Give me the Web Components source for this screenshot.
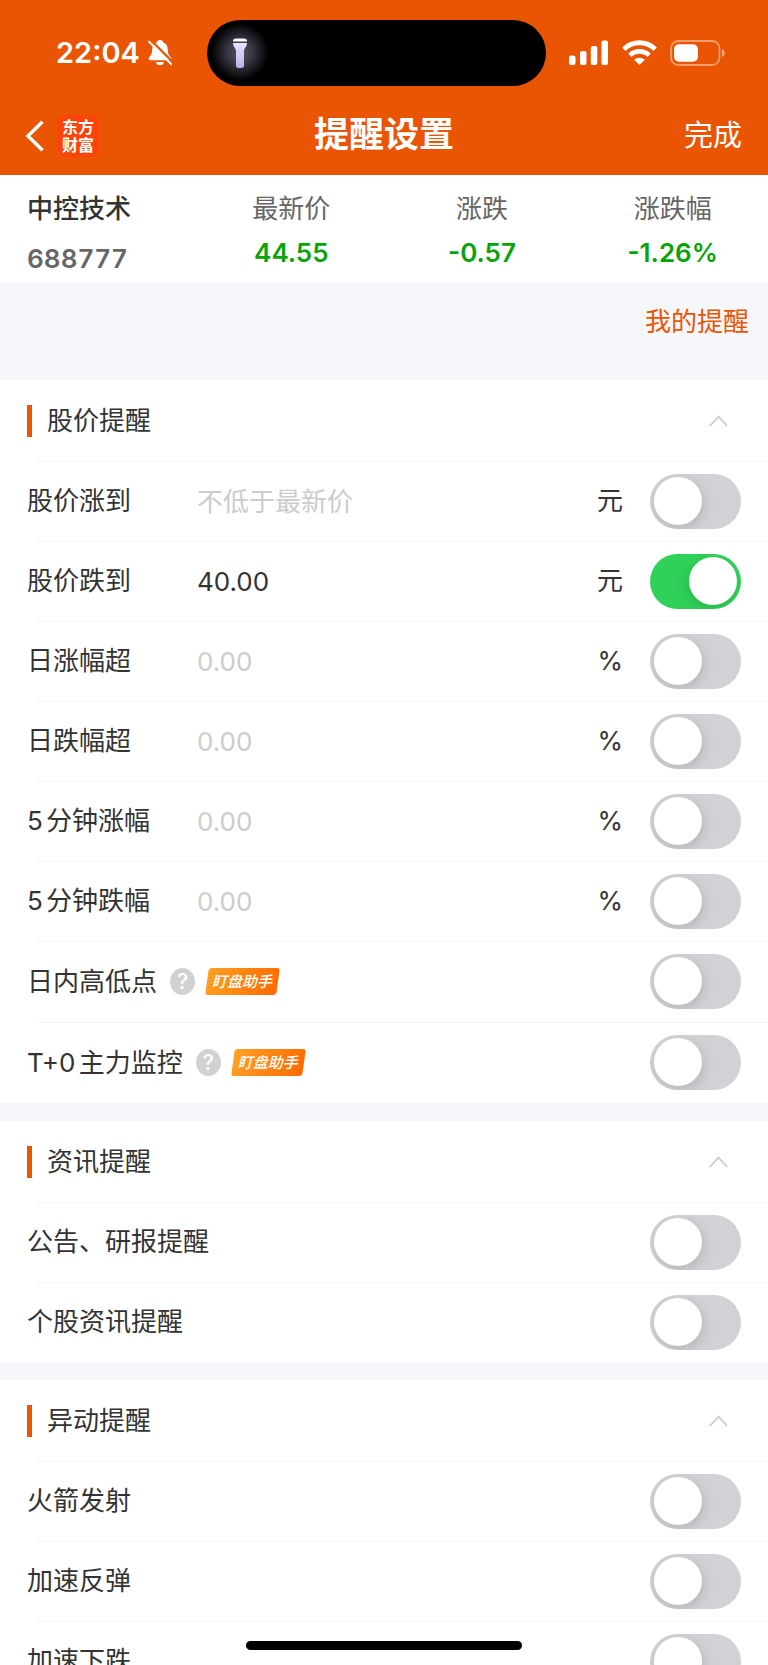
<!DOCTYPE html>
<html lang="zh-CN">
<head>
<meta charset="utf-8">
<meta name="viewport" content="width=device-width, initial-scale=1">
<title>提醒设置</title>
<style>
html, body { margin: 0; height: 100%; }
body { font-family: Inter, "Noto Sans CJK SC", sans-serif; font-size: 26px; line-height: 36px; text-autospace: normal; color: #333; background: #f6f7fa; --brand: #ea5504; --line: #f4f4f6; --muted: #666; --fall: #07a307; }
</style>
</head>
<body>
<alert-screen>
  <status-bar slot="top"></status-bar>
  <nav-bar slot="top" heading="提醒设置" action="完成"></nav-bar>
  <stock-quote slot="top" name="中控技术" code="688777">
    <quote-cell label="最新价">44.55</quote-cell>
    <quote-cell label="涨跌">-0.57</quote-cell>
    <quote-cell label="涨跌幅">-1.26%</quote-cell>
  </stock-quote>
  <my-alerts>我的提醒</my-alerts>
  <alert-section heading="股价提醒">
    <alert-row label="股价涨到" unit="元" placeholder="不低于最新价"></alert-row>
    <alert-row label="股价跌到" unit="元" value="40.00" checked></alert-row>
    <alert-row label="日涨幅超" unit="%" placeholder="0.00"></alert-row>
    <alert-row label="日跌幅超" unit="%" placeholder="0.00"></alert-row>
    <alert-row label="5分钟涨幅" unit="%" placeholder="0.00"></alert-row>
    <alert-row label="5分钟跌幅" unit="%" placeholder="0.00"></alert-row>
    <alert-row label="日内高低点" tagged><help-button></help-button><helper-tag>盯盘助手</helper-tag></alert-row>
    <alert-row label="T+0主力监控" tagged><help-button></help-button><helper-tag>盯盘助手</helper-tag></alert-row>
  </alert-section>
  <alert-section heading="资讯提醒">
    <alert-row label="公告、研报提醒"></alert-row>
    <alert-row label="个股资讯提醒"></alert-row>
  </alert-section>
  <alert-section heading="异动提醒">
    <alert-row label="火箭发射"></alert-row>
    <alert-row label="加速反弹"></alert-row>
    <alert-row label="加速下跌"></alert-row>
  </alert-section>
</alert-screen>

<script>
class Base extends HTMLElement {
  connectedCallback() {
    if (this.shadowRoot) return;
    this.attachShadow({ mode: 'open' }).innerHTML =
      '<style>:host,*{box-sizing:border-box}button{font:inherit;color:inherit;background:none;border:0;padding:0;margin:0;cursor:pointer}svg{display:block}' +
      this.css() + '</style>' + this.html();
  }
  attr(n) { return this.getAttribute(n) || ''; }
  css() { return ''; }
  html() { return '<slot></slot>'; }
}

customElements.define('alert-screen', class extends Base {
  css() { return `
    :host { display: flex; flex-direction: column; height: 100vh; position: relative; overflow: hidden; }
    header { flex: none; }
    main { flex: 1; min-height: 0; overflow-y: auto; scrollbar-width: none; display: flex; flex-direction: column; gap: 18px; }
    .home { position: absolute; bottom: 15px; left: 0; right: 0; margin: auto; width: 36%; height: 9px; border-radius: 5px; background: #000; }
  `; }
  html() { return '<header><slot name="top"></slot></header><main><slot></slot></main><div class="home"></div>'; }
});

customElements.define('status-bar', class extends Base {
  css() { return `
    :host { display: flex; align-items: center; padding: 20px 43px 10px 56px; background: var(--brand); color: #fff; }
    .clock { width: 151px; display: flex; align-items: center; gap: 8px; font-size: 29px; font-weight: 600; }
    .island { flex: 1; height: 66px; border-radius: 33px; background: radial-gradient(circle at 33px 32px, #55505f 0, #3c3945 12px, #17161c 22px, #000 29px); }
    .island svg { margin: 18px 0 0 25px; }
    .signals { display: flex; align-items: center; gap: 13px; margin-left: 23px; }
  `; }
  html() { return `
    <div class="clock"><span>22:04</span>
      <svg width="24" height="26" viewBox="0 0 24 26" aria-hidden="true">
        <path fill="#fff" d="M12 0c1.9 0 2.9 1 3.1 2.2 3.3 1.200 4.500 4 4.700 7.300.2 4.500 1.200 6 3.100 7.800 1 1 .5 2.900-1.100 2.900H2.200C.6 20.200.1 18.300 1.100 17.300c1.900-1.800 2.900-3.300 3.100-7.800.2-3.300 1.400-6.100 4.700-7.300C9.100 1 10.100 0 12 0zM8 22h8c-.4 2-2 3.300-4 3.300S8.400 24 8 22z"/>
        <path d="M2.200-.6 25 22.400" stroke="#ea5504" stroke-width="2.200"/>
        <path d="M1 1.600 23.400 24.400" stroke="#fff" stroke-width="2" stroke-linecap="round"/>
      </svg>
    </div>
    <div class="island"><svg width="16" height="32" viewBox="0 0 16 32" aria-hidden="true">
      <defs><linearGradient id="t" x2="0" y2="1"><stop stop-color="#e8e4ff"/><stop offset="1" stop-color="#b6b2e6"/></linearGradient></defs>
      <path fill="#fff" d="M1 3.500C1 1.500 2 .5 4 .5h8c2 0 3 1 3 3z"/>
      <path fill="url(#t)" d="M1 5h14c0 4-3 5-3 8v14.500c0 1.600-.8 2.500-2.300 2.500H6.300C4.800 30 4 29.100 4 27.500V13c0-3-3-4-3-8z"/>
    </svg></div>
    <div class="signals">
      <svg width="40" height="26" viewBox="0 0 40 26" fill="#fff" aria-hidden="true"><rect y="15.500" width="6.500" height="9.500" rx="2"/><rect x="11" y="11" width="6.500" height="14" rx="2"/><rect x="21.800" y="6" width="6.500" height="19" rx="2"/><rect x="32.500" y=".5" width="6.500" height="24.500" rx="2"/></svg>
      <svg width="35" height="26" viewBox="0 0 35 26" aria-hidden="true">
        <path fill="none" stroke="#fff" stroke-width="4.800" d="M1.800 9.200C10.400.6 24.600.6 33.200 9.200M7.800 15.200c5.400-5.200 14-5.200 19.400 0"/>
        <path fill="#fff" d="M17.500 25l-5.300-5.300c2.800-2.700 7.800-2.700 10.600 0z"/></svg>
      <svg width="55" height="26" viewBox="0 0 55 26" aria-hidden="true">
        <rect x="1" y="1" width="48.500" height="24" rx="7.500" fill="none" stroke="#fff" stroke-opacity=".42" stroke-width="1.800"/>
        <rect x="4" y="4.200" width="24" height="17.600" rx="5" fill="#fff"/>
        <path fill="#fff" fill-opacity=".5" d="M52 9c3.600 1.400 3.600 6.600 0 8z"/></svg>
    </div>`; }
});

customElements.define('nav-bar', class extends Base {
  css() { return `
    :host { display: grid; grid-template-columns: 1fr auto 1fr; align-items: center; height: 79px; padding: 0 26px; background: var(--brand); color: #fff; }
    .left { display: flex; align-items: center; gap: 13px; }
    .logo { width: 42px; height: 42px; padding: 3px 5px; border-radius: 9px; background: #ff4208; font-size: 16px; line-height: 18px; font-weight: 700; }
    h1 { margin: 0; padding-bottom: 4px; font-size: 35px; line-height: 48px; font-weight: 700; }
    .done { justify-self: end; font-size: 29px; line-height: 40px; }
  `; }
  html() { return `
    <div class="left"><button aria-label="返回"><svg width="18" height="32" viewBox="0 0 18 32"><path d="M16.500 1.800 2 16l14.500 14.200" fill="none" stroke="#fff" stroke-width="3.400"/></svg></button>
    <div class="logo">东方<br>财富</div></div>
    <h1>${this.attr('heading')}</h1><button class="done">${this.attr('action')}</button>`; }
});

customElements.define('stock-quote', class extends Base {
  css() { return `
    :host { display: grid; grid-template-columns: 196px 1fr 1fr 1fr; height: 107px; padding-top: 16px; background: #fff; }
    .name { padding-left: 27px; display: flex; flex-direction: column; gap: 14px; font-weight: 500; }
    .code { color: var(--muted); font-weight: 600; font-variant-numeric: tabular-nums; }
  `; }
  html() { return `<div class="name"><span>${this.attr('name')}</span><span class="code">${this.attr('code')}</span></div><slot></slot>`; }
});

customElements.define('quote-cell', class extends Base {
  css() { return `
    :host { display: flex; flex-direction: column; align-items: center; gap: 8px; }
    .label { color: var(--muted); }
    .value { color: var(--fall); font-weight: 600; }
  `; }
  html() { return `<span class="label">${this.attr('label')}</span><span class="value"><slot></slot></span>`; }
});

customElements.define('my-alerts', class extends Base {
  css() { return `
    :host { display: flex; justify-content: flex-end; flex: none; height: 80px; padding: 22px 19px 0; }
    a { color: var(--brand); text-decoration: none; }
  `; }
  html() { return '<a href="#"><slot></slot></a>'; }
});

customElements.define('alert-section', class extends Base {
  css() { return `
    :host { display: block; flex: none; background: #fff; }
    .head { display: flex; align-items: center; height: 81px; padding: 0 40px 0 27px; }
    .head::before { content: ""; width: 5px; height: 32px; margin-right: 15px; background: var(--brand); }
    h2 { flex: 1; margin: 0; font: inherit; }
  `; }
  html() { return `
    <div class="head"><h2>${this.attr('heading')}</h2>
    <button aria-label="收起"><svg width="19" height="12" viewBox="0 0 19 12"><path d="M.8 11 9.500 1.600 18.200 11" fill="none" stroke="#ccc" stroke-width="1.800"/></svg></button></div>
    <slot></slot>`; }
});

customElements.define('alert-row', class extends Base {
  css() { return `
    :host { display: flex; align-items: center; height: 80px; padding: 0 27px; background: linear-gradient(var(--line), var(--line)) 36px 0 / 100% 1px no-repeat; }
    :host([tagged]) { height: 81px; }
    :host([unit]) label { width: 170px; }
    .fill { flex: 1; display: flex; align-items: center; gap: 10px; padding-left: 13px; }
    .field { flex: 1; min-width: 0; width: 0; height: 40px; padding: 0; border: 0; outline: 0; background: none; font: inherit; color: #333; }
    .field::placeholder { color: #ccc; opacity: 1; }
    .unit { margin-right: 27px; }
    .switch { appearance: none; flex: none; position: relative; width: 91px; height: 55px; margin: 0; border-radius: 28px; background: #d1d1d6; overflow: hidden; }
    .switch::before { content: ""; position: absolute; top: 3px; left: 4px; width: 48px; height: 48px; border-radius: 50%; background: #fff; box-shadow: 2px 4px 12px rgba(0,0,0,.13); }
    .switch:checked { background: #30d158; }
    .switch:checked::before { left: 39px; box-shadow: -2px 4px 12px rgba(0,0,0,.13); }
  `; }
  html() {
    const unit = this.attr('unit'), label = this.attr('label');
    const middle = unit
      ? `<input class="field" inputmode="decimal" aria-label="${label}数值" value="${this.attr('value')}" placeholder="${this.attr('placeholder')}"><span class="unit">${unit}</span>`
      : '<div class="fill"><slot></slot></div>';
    return `<label for="sw">${label}</label>${middle}<input id="sw" class="switch" type="checkbox" role="switch"${this.hasAttribute('checked') ? ' checked' : ''}>`;
  }
});

customElements.define('help-button', class extends Base {
  css() { return `
    :host { display: block; }
    button { display: block; width: 25px; height: 27px; border-radius: 50%; background: #d1d1d4; color: #fff; font-size: 21px; line-height: 27px; font-weight: 500; text-align: center; }
  `; }
  html() { return '<button aria-label="说明">?</button>'; }
});

customElements.define('helper-tag', class extends Base {
  css() { return `
    :host { display: block; position: relative; isolation: isolate; padding: 0 8px 0 7px; font-size: 15px; line-height: 27px; font-style: italic; font-weight: 500; color: #fff; }
    :host::before { content: ""; position: absolute; z-index: -1; inset: 0 2px; border-radius: 3px; background: linear-gradient(100deg, #ffa024, #ff6a00); transform: skewX(-8deg); }
  `; }
});
</script>
</body>
</html>
